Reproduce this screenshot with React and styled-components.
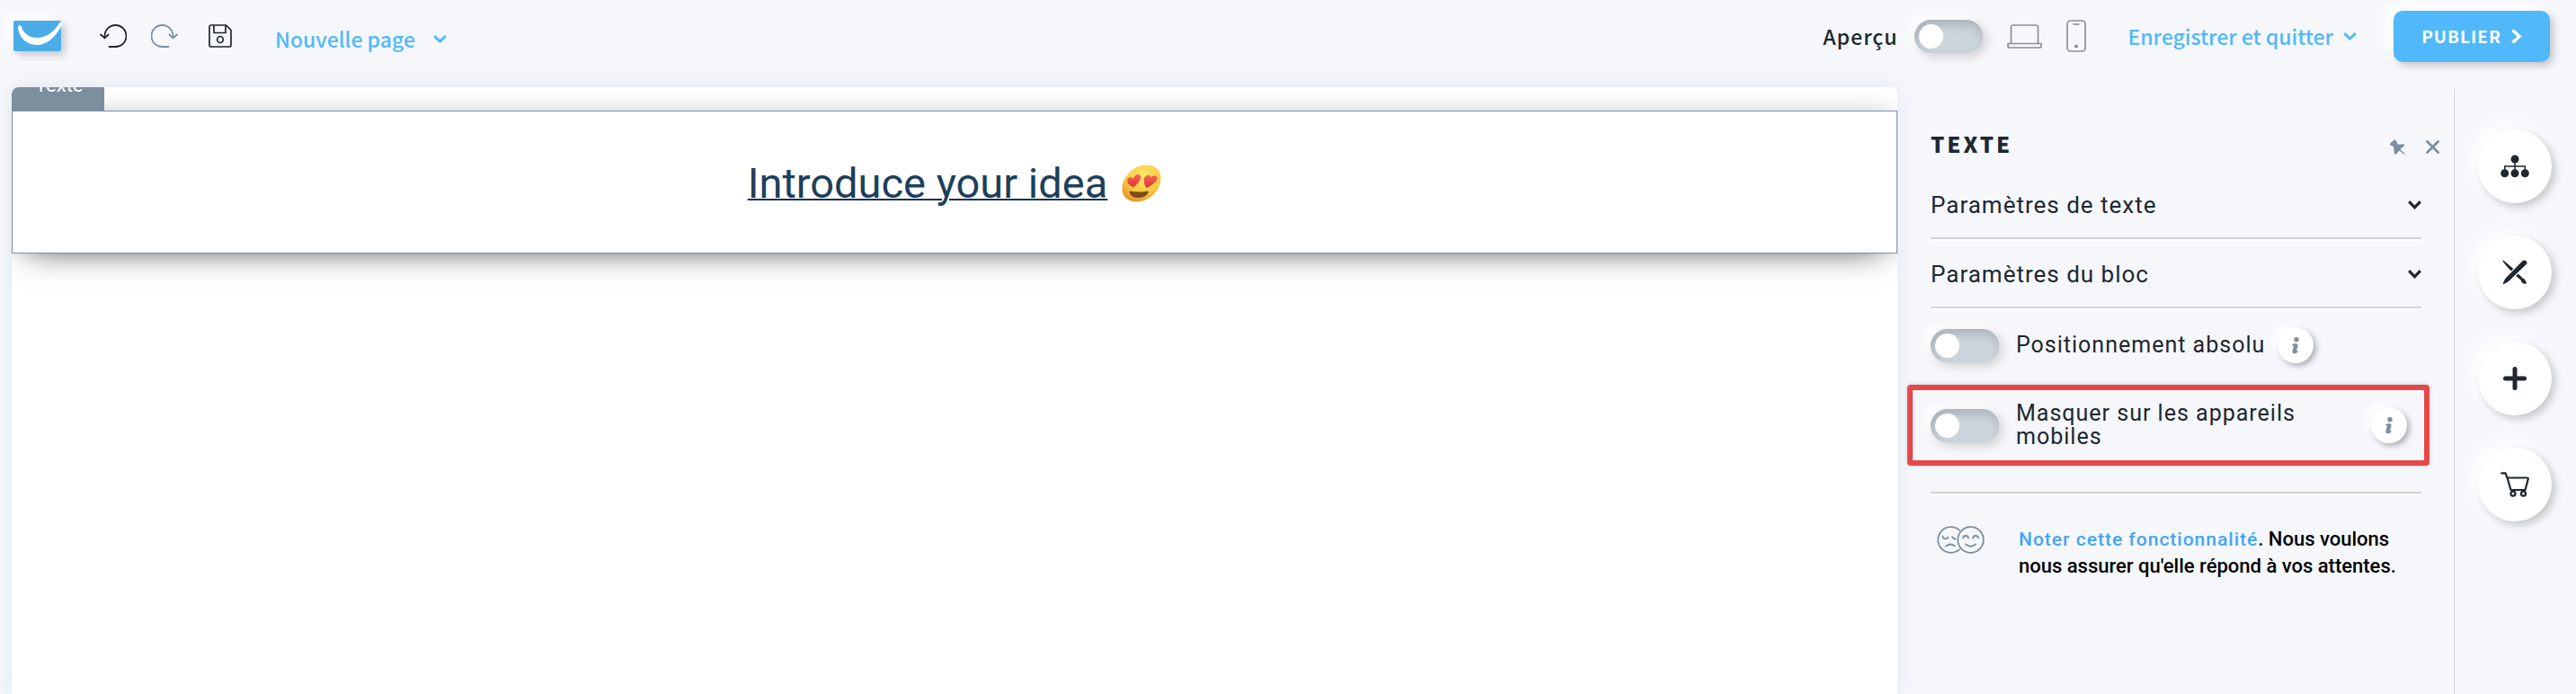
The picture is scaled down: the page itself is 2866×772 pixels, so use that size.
import { useState } from "react";
import styled, { createGlobalStyle } from "styled-components";

export default function App() {
  const [preview, setPreview] = useState(false);
  const [absolute, setAbsolute] = useState(false);
  const [hideMobile, setHideMobile] = useState(false);

  return (
    <>
      <GlobalStyle />
      <Page>
        <TopBar>
          <LogoLink href="#home" aria-label="GetResponse">
            <LogoIcon />
          </LogoLink>
          <History>
            <IconButton aria-label="Annuler">
              <UndoIcon />
            </IconButton>
            <IconButton aria-label="Rétablir" $muted>
              <RedoIcon />
            </IconButton>
          </History>
          <IconButton aria-label="Enregistrer">
            <SaveIcon />
          </IconButton>
          <PageMenu aria-haspopup="menu">
            Nouvelle page
            <ChevronDown width={15} height={9} stroke={3} />
          </PageMenu>

          <Spacer />

          <PreviewLabel htmlFor="preview">Aperçu</PreviewLabel>
          <Toggle
            id="preview"
            type="checkbox"
            checked={preview}
            onChange={() => setPreview(!preview)}
          />
          <Devices>
            <IconButton aria-label="Ordinateur" $device>
              <LaptopIcon />
            </IconButton>
            <IconButton aria-label="Mobile" $device>
              <PhoneIcon />
            </IconButton>
          </Devices>
          <SaveMenu aria-haspopup="menu">
            Enregistrer et quitter
            <ChevronDown width={15} height={9} stroke={3} />
          </SaveMenu>
          <PublishButton>
            PUBLIER
            <ChevronRight />
          </PublishButton>
        </TopBar>

        <Workspace>
          <Canvas>
            <TextBlock>
              <BlockTag>Texte</BlockTag>
              <Heading>
                <u>Introduce your idea</u>
                <HeartEyes />
              </Heading>
            </TextBlock>
          </Canvas>

          <Panel>
            <PanelHeader>
              <PanelTitle>TEXTE</PanelTitle>
              <PanelAction aria-label="Épingler" $muted>
                <PinIcon />
              </PanelAction>
              <PanelAction aria-label="Fermer" $muted>
                <CloseIcon />
              </PanelAction>
            </PanelHeader>
            <Accordion aria-expanded="false">
              Paramètres de texte
              <ChevronDown width={15} height={10} stroke={3} />
            </Accordion>
            <Accordion aria-expanded="false">
              Paramètres du bloc
              <ChevronDown width={15} height={10} stroke={3} />
            </Accordion>
            <Option>
              <Toggle
                id="absolute"
                type="checkbox"
                checked={absolute}
                onChange={() => setAbsolute(!absolute)}
              />
              <OptionLabel htmlFor="absolute">Positionnement absolu</OptionLabel>
              <InfoButton aria-label="Informations">
                <InfoIcon />
              </InfoButton>
            </Option>
            <HighlightedOption>
              <Toggle
                id="hide-mobile"
                type="checkbox"
                checked={hideMobile}
                onChange={() => setHideMobile(!hideMobile)}
              />
              <OptionLabel htmlFor="hide-mobile" $grow>
                Masquer sur les appareils mobiles
              </OptionLabel>
              <InfoButton aria-label="Informations">
                <InfoIcon />
              </InfoButton>
            </HighlightedOption>
            <Divider />
            <Feedback>
              <FacesIcon />
              <FeedbackText>
                <a href="#feedback">Noter cette fonctionnalité</a>. Nous voulons
                <br />
                nous assurer qu'elle répond à vos attentes.
              </FeedbackText>
            </Feedback>
          </Panel>

          <Rail>
            <RoundButton aria-label="Structure">
              <SitemapIcon />
            </RoundButton>
            <RoundButton aria-label="Style">
              <DesignIcon />
            </RoundButton>
            <RoundButton aria-label="Ajouter">
              <PlusIcon />
            </RoundButton>
            <RoundButton aria-label="Boutique">
              <CartIcon />
            </RoundButton>
          </Rail>
        </Workspace>
      </Page>
    </>
  );
}

function LogoIcon() {
  return (
    <svg width="53" height="34" viewBox="0 0 53 34">
      <rect width="53" height="34" rx="2" fill="#4aade8" />
      <path
        d="M5 7.500C5 5 8.400 4.400 9 7C11 14.500 18 19 26 19C36 19 45.500 12.500 51.500 2L53 1.500V6.500C46 19 37 27 26 27C14.500 27 6 18.500 5 7.500Z"
        fill="#fff"
      />
    </svg>
  );
}

function UndoIcon() {
  return (
    <svg width="30" height="26" viewBox="0 0 30 26" fill="none" stroke="currentColor" strokeWidth="1.8" strokeLinecap="round" strokeLinejoin="round">
      <path d="M10.500 25H17A12 12 0 1 0 5.500 13V15" />
      <path d="M1 11.500L5.500 15.300L9.500 11.500" />
    </svg>
  );
}

function RedoIcon() {
  return (
    <svg width="30" height="26" viewBox="0 0 30 26" fill="none" stroke="currentColor" strokeWidth="1.8" strokeLinecap="round" strokeLinejoin="round">
      <path d="M19.500 25H13A12 12 0 1 1 24.500 13V15" />
      <path d="M29 11.500L24.500 15.300L20.500 11.500" />
    </svg>
  );
}

function SaveIcon() {
  return (
    <svg width="26" height="26" viewBox="0 0 26 26" fill="none" stroke="currentColor" strokeWidth="1.700" strokeLinejoin="round">
      <path d="M3 1H19.500L25 6.500V23A2 2 0 0 1 23 25H3A2 2 0 0 1 1 23V3A2 2 0 0 1 3 1Z" />
      <path d="M6 1V9.500H19V1" />
      <ellipse cx="13" cy="17" rx="3.300" ry="3.500" />
    </svg>
  );
}

function LaptopIcon() {
  return (
    <svg width="39" height="27" viewBox="0 0 39 27" fill="none" stroke="currentColor" strokeWidth="1.700" strokeLinejoin="round">
      <path d="M4.500 21.500V3A2 2 0 0 1 6.500 1H32.500A2 2 0 0 1 34.500 3V21.500" />
      <path d="M1 21.500H38V24A2 2 0 0 1 36 26H3A2 2 0 0 1 1 24Z" />
    </svg>
  );
}

function PhoneIcon() {
  return (
    <svg width="22" height="36" viewBox="0 0 22 36" fill="none" stroke="currentColor" strokeWidth="1.700">
      <rect x="1" y="1" width="20" height="34" rx="3.500" />
      <path d="M7.500 5H14.500" />
      <circle cx="11" cy="29.500" r="2" fill="currentColor" stroke="none" />
    </svg>
  );
}

function ChevronDown({ width, height, stroke }) {
  return (
    <svg width={width} height={height} viewBox="0 0 15 9" preserveAspectRatio="none" fill="none" stroke="currentColor" strokeWidth={stroke}>
      <path d="M1.200 1.200L7.500 7L13.800 1.200" />
    </svg>
  );
}

function ChevronRight() {
  return (
    <svg width="12" height="17" viewBox="0 0 12 17" fill="none" stroke="currentColor" strokeWidth="3.400">
      <path d="M1.500 1.500L9 8.500L1.500 15.500" />
    </svg>
  );
}

function PinIcon() {
  return (
    <svg width="17" height="17" viewBox="0 0 17 17" fill="currentColor">
      <path d="M5.500 .3L7.800 3L8.200 5.200L10.500 5.800L15.500 5.300L16 7.500L13 9.500L11.500 11.500L17 16.200L16.300 17L10.300 12.500L7 16.500L4.800 16.200L4.300 9L3 7.300L.2 6.800L.5 4Z" />
    </svg>
  );
}

function CloseIcon() {
  return (
    <svg width="15" height="15" viewBox="0 0 15 15" fill="none" stroke="currentColor" strokeWidth="2.800" strokeLinecap="round">
      <path d="M1.500 1.500L13.500 13.500M13.500 1.500L1.500 13.500" />
    </svg>
  );
}

function InfoIcon() {
  return (
    <svg width="10" height="19" viewBox="0 0 10 19" fill="currentColor">
      <circle cx="6" cy="2.800" r="2.700" />
      <path d="M1 8.500C2.500 7 4.500 7 6 7.300C8 7.800 7.600 9.500 7.200 10.800L6.300 14C6 15.300 6.500 15.600 7.800 14.800C7.300 17 6.300 18.300 4 18.300C1.800 18.300 1 17 1.500 15L2.700 10.800C3 9.500 2.800 9 1 9.500Z" />
    </svg>
  );
}

function FacesIcon() {
  return (
    <svg width="53" height="31" viewBox="0 0 53 31" fill="none" stroke="#7c8f9f" strokeWidth="1.800" strokeLinecap="round">
      <path d="M25 4.800A14.300 14.300 0 1 0 25 26.200" />
      <circle cx="37.500" cy="15.500" r="14.300" />
      <path d="M6.500 11.500Q6.500 14.500 9.500 14.300Q12 14.300 12.500 12.500M17 12Q17.800 14.500 20.500 14.500" />
      <path d="M10 22.500Q15 18.500 20 22.500" />
      <path d="M29 13.500Q29.500 11 32 11Q34.500 11 35 13.500M40 13.500Q40.500 11 43 11Q45.500 11 46 13.500" />
      <path d="M32 20.500Q37.500 25 43 20.500" />
    </svg>
  );
}

function SitemapIcon() {
  return (
    <svg width="32" height="26" viewBox="0 0 32 26" fill="currentColor">
      <circle cx="16" cy="5" r="4.500" />
      <circle cx="4.700" cy="20.800" r="4.500" />
      <circle cx="16" cy="20.800" r="4.500" />
      <circle cx="27.300" cy="20.800" r="4.500" />
      <path d="M4.700 20V13H27.300V20M16 5V20" fill="none" stroke="currentColor" strokeWidth="1.500" />
    </svg>
  );
}

function DesignIcon() {
  return (
    <svg width="28" height="28" viewBox="0 0 28 28" fill="currentColor">
      <path d="M.5 .8C.8 .2 1.500 .8 2 1.300L12.200 10L10 12.500C6.500 9 3.500 6 .8 2Z" />
      <path d="M17.700 15.600L22.800 20.500C25.500 20.800 25.500 24.500 27.500 25.700C24.500 28 21 26 20.800 22.800L15.300 17.900Z" />
      <path d="M22.800 1C25 -.8 28.800 2 27 4.700L8.500 22.500C6 25 3.500 26.500 .6 27.200C1.300 24 3 21.300 5 19Z" />
    </svg>
  );
}

function PlusIcon() {
  return (
    <svg width="26" height="26" viewBox="0 0 26 26" stroke="currentColor" strokeWidth="5" strokeLinecap="round">
      <path d="M13 2.500V23.500M2.500 13H23.500" />
    </svg>
  );
}

function CartIcon() {
  return (
    <svg width="32" height="28" viewBox="0 0 32 28" fill="none" stroke="currentColor" strokeWidth="2.200" strokeLinecap="round" strokeLinejoin="round">
      <path d="M1.200 1.300H5.500L7.500 6.500H29.500Q31 6.500 30.700 8L27.500 20H11.500L7.500 6.500" />
      <circle cx="14" cy="24.200" r="2.500" />
      <circle cx="25.500" cy="24.200" r="2.500" />
    </svg>
  );
}

function HeartEyes() {
  return (
    <svg width="44" height="42" viewBox="0 0 44 42" role="img" aria-label="😍">
      <defs>
        <radialGradient id="face" cx="0.55" cy="0.3" r="0.7">
          <stop offset="0" stopColor="#ffe96b" />
          <stop offset="0.6" stopColor="#fccb45" />
          <stop offset="1" stopColor="#e59a2c" />
        </radialGradient>
        <linearGradient id="heart" x1="0" y1="0" x2="0" y2="1">
          <stop offset="0" stopColor="#f4655a" />
          <stop offset="1" stopColor="#dd3630" />
        </linearGradient>
      </defs>
      <path
        d="M27 .5C37 .5 43.500 6 43.500 15C43.500 29 30 41.500 17 41.500C7 41.500 .5 36 .5 27C.5 13 14 .5 27 .5Z"
        fill="url(#face)"
      />
      <path
        d="M13 25.500C8 23 4.500 19 7 15.500C9 13.500 11.500 14 12.800 16C14.500 11 18 10 20.500 12C23 16 18 21.500 13 25.500Z"
        fill="url(#heart)"
      />
      <path
        d="M27.500 26C23.500 20 24 14 27.500 12.500C30 11 32.500 12 32.500 14.500C35 11.500 38.500 11.500 39.500 14.500C40 18.500 33.500 23.500 27.500 26Z"
        fill="url(#heart)"
      />
      <path d="M8.500 29.500Q19 31.500 30 29.500C29.500 34 24.500 37 18.500 37C12.500 37 8.500 34 8.500 29.500Z" fill="#7b4a16" />
    </svg>
  );
}

const GlobalStyle = createGlobalStyle`
  * {
    box-sizing: border-box;
  }

  body {
    margin: 0;
    background-color: #f5f7fb;
    color: #20272e;
    font-family: Roboto, "Liberation Sans", sans-serif;
  }

  button {
    font: inherit;
    color: inherit;
    background: none;
    border: none;
    padding: 0;
    cursor: pointer;
  }

  svg {
    display: block;
    flex: none;
  }
`;

const Page = styled.div`
  display: flex;
  flex-direction: column;
  min-height: 100vh;
`;

const TopBar = styled.header`
  display: flex;
  align-items: center;
  height: 82px;
  margin-bottom: 15px;
  padding: 0 29px 2px 15px;
  font-family: "Noto Sans CJK SC", "Noto Sans", sans-serif;
  font-size: 23px;
  font-weight: 500;
  line-height: 32px;
`;

const LogoLink = styled.a`
  border-radius: 2px;
  box-shadow: 4px 4px 8px rgba(0, 0, 0, 0.2), -8px -8px 16px #fff;
`;

const History = styled.div`
  display: flex;
  gap: 27px;
  margin: 0 34px 0 43px;
`;

const IconButton = styled.button`
  color: ${({ $muted, $device }) =>
    $device ? "#8f8f8f" : $muted ? "#7c8f9f" : "#20272e"};
`;

const MenuButton = styled.button`
  display: flex;
  align-items: center;
  color: #50b8fb;
`;

const PageMenu = styled(MenuButton)`
  gap: 20px;
  margin-left: 48px;
  padding-top: 6px;
`;

const Spacer = styled.div`
  flex: 1;
`;

const PreviewLabel = styled.label`
  margin-right: 19px;
  letter-spacing: 1px;
`;

const Toggle = styled.input`
  flex: none;
  appearance: none;
  width: 76px;
  height: 37px;
  margin: 0;
  padding: 5px;
  border-radius: 19px;
  background-color: #ccd5dc;
  box-shadow: inset 3px 6px 12px #a9b3b9, 4px 4px 12px rgba(0, 0, 0, 0.16),
    -6px -6px 12px #fff;
  cursor: pointer;

  &::before {
    content: "";
    display: block;
    width: 27px;
    height: 27px;
    border-radius: 50%;
    background-color: #fff;
  }

  &:checked {
    background-color: #50b8fb;
  }

  &:checked::before {
    margin-left: auto;
  }
`;

const Devices = styled.div`
  display: flex;
  align-items: center;
  gap: 27px;
  margin: 0 46px 0 27px;
`;

const SaveMenu = styled(MenuButton)`
  gap: 11px;
  margin-right: 41px;
`;

const PublishButton = styled.button`
  display: flex;
  align-items: center;
  justify-content: center;
  gap: 11px;
  width: 174px;
  height: 57px;
  border-radius: 10px;
  background-color: #50b8fb;
  color: #fff;
  font-size: 19px;
  font-weight: 700;
  letter-spacing: 1px;
  box-shadow: 4px 4px 8px rgba(0, 0, 0, 0.2), -8px -8px 16px #fff;
`;

const Workspace = styled.main`
  display: flex;
  flex: 1;
`;

const Canvas = styled.section`
  flex: 1;
  margin-left: 13px;
  overflow: hidden;
  border-radius: 8px 8px 0 0;
  background-color: #fff;
  box-shadow: 0 0 20px #dfe7ee;
`;

const TextBlock = styled.div`
  position: relative;
  display: flex;
  align-items: center;
  justify-content: center;
  height: 159px;
  margin-top: 26px;
  border: 1px solid #7c8f9f;
  background-color: #fff;
  box-shadow: 0 12px 36px -18px rgba(0, 0, 0, 0.75),
    0 -4px 24px -4px rgba(0, 0, 0, 0.14);
`;

const BlockTag = styled.span`
  position: absolute;
  left: -1px;
  bottom: 100%;
  padding: 8px 23px 16px 26px;
  background-color: #7c8f9f;
  color: #fff;
  font-size: 22px;
  line-height: 26px;
`;

const Heading = styled.h1`
  display: flex;
  align-items: center;
  gap: 16px;
  margin: 0;
  padding-top: 2px;
  color: #1d3f5c;
  font-size: 47px;
  font-weight: 400;
  line-height: 56px;

  u {
    text-decoration-color: #17305c;
    text-decoration-thickness: 2px;
  }
`;

const Panel = styled.aside`
  flex: none;
  width: 619px;
  padding: 43px 36px 0 37px;
  font-size: 25px;
  line-height: 26px;
`;

const PanelHeader = styled.div`
  display: flex;
  align-items: center;
  gap: 23px;
  height: 40px;
  margin: 0 -20px 9px 0;
`;

const PanelTitle = styled.h2`
  flex: 1;
  margin: 0;
  font-family: "Noto Sans CJK SC", "Noto Sans", sans-serif;
  font-size: 24px;
  font-weight: 900;
  letter-spacing: 3px;
`;

const PanelAction = styled(IconButton)`
  padding-top: 6px;
`;

const Accordion = styled.button`
  display: flex;
  align-items: center;
  justify-content: space-between;
  width: 100%;
  height: 77px;
  padding-top: 2px;
  border-bottom: 2px solid #d0d2d4;
  box-shadow: 0 2px 0 #fff;
  font-size: 26px;
  letter-spacing: 1px;
`;

const Option = styled.div`
  display: flex;
  align-items: center;
  gap: 19px;
  height: 82px;
  margin-bottom: 3px;
`;

const HighlightedOption = styled(Option)`
  height: 90px;
  margin: 0 -9px 29px -26px;
  padding: 0 19px 0 20px;
  border: 6px solid #e5484a;
  border-radius: 4px;
  box-shadow: 0 0 4px rgba(0, 0, 0, 0.2);
`;

const OptionLabel = styled.label`
  flex: ${({ $grow }) => ($grow ? 1 : "none")};
  margin-right: -5px;
  letter-spacing: 1px;
`;

const InfoButton = styled.button`
  display: flex;
  align-items: center;
  justify-content: center;
  flex: none;
  width: 40px;
  height: 40px;
  border-radius: 50%;
  background-color: #fff;
  color: #7c8f9f;
  box-shadow: 3px 3px 6px rgba(0, 0, 0, 0.3), -5px -5px 10px #fff;
`;

const Divider = styled.hr`
  height: 2px;
  margin: 0;
  border: none;
  background-color: #d0d2d4;
  box-shadow: 0 2px 0 #fff;
`;

const Feedback = styled.div`
  display: flex;
  align-items: flex-start;
  gap: 38px;
  margin-top: 36px;
  padding-left: 7px;
`;

const FeedbackText = styled.p`
  margin: 0;
  color: #000;
  font-size: 22px;
  font-weight: 500;
  line-height: 29px;

  a {
    color: #45a5f5;
    font-size: 21px;
    letter-spacing: 1px;
    text-decoration: none;
  }
`;

const Rail = styled.nav`
  display: flex;
  flex-direction: column;
  gap: 36px;
  flex: none;
  width: 136px;
  padding: 47px 0 0 26px;
  border-left: 1px solid #cfd1d4;
  box-shadow: -1px 0 0 #fff;
`;

const RoundButton = styled.button`
  display: flex;
  align-items: center;
  justify-content: center;
  width: 82px;
  height: 82px;
  border-radius: 50%;
  background-color: #fff;
  box-shadow: 4px 4px 10px rgba(0, 0, 0, 0.2), -8px -8px 20px #fff;
`;
